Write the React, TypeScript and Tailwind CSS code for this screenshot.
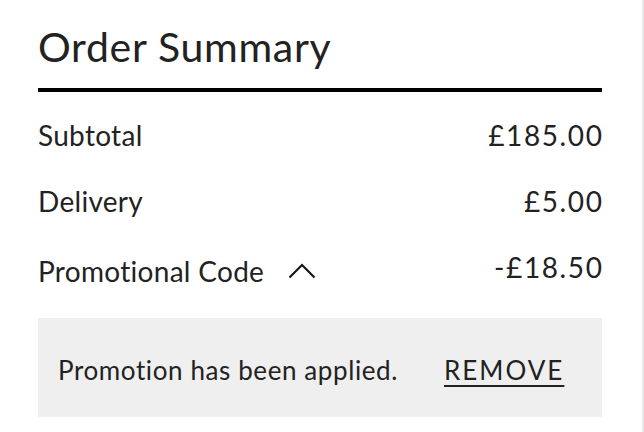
import React from "react";

const rows = [
  { label: "Subtotal", value: "£185.00" },
  { label: "Delivery", value: "£5.00" },
];

function Chevron() {
  return (
    <svg width="28" height="16" viewBox="0 0 28 16" fill="none" className="shrink-0">
      <path d="M1.5 14.5L14 2L26.5 14.5" stroke="#111" strokeWidth="2" />
    </svg>
  );
}

export default function App() {
  return (
    <div className="w-[644px] h-[432px] bg-white border-r-2 border-[#ebebeb] font-['Lato',sans-serif] text-[#222]">
      <div className="pl-[38px] pr-[40px] pt-[20px]">
        <h2 className="text-[41px] leading-[54px] font-normal tracking-[0.7px]">Order Summary</h2>
        <div className="mt-[14px] h-[4px] bg-black" />

        <div className="pt-[10px]">
          {rows.map((r) => (
            <div key={r.label} className="flex justify-between items-center h-[66px] text-[28px] tracking-[0.3px]">
              <span>{r.label}</span>
              <span className="tracking-[1.6px] -mr-[1.5px]">{r.value}</span>
            </div>
          ))}
          <div className="flex justify-between items-start h-[66px] text-[28px] tracking-[0.3px]">
            <button className="flex items-center gap-[24px] mt-[16px]">
              <span>Promotional Code</span>
              <Chevron />
            </button>
            <span className="mt-[12px] tracking-[1.6px] -mr-[1.5px]">-£18.50</span>
          </div>
        </div>

        <div className="mt-[18px] h-[99px] bg-[#efefef] flex items-center pl-[20px] pt-[5px] gap-[46px]">
          <span className="text-[26px] tracking-[0.6px]">Promotion has been applied.</span>
          <button className="text-[26px] tracking-[2px] underline decoration-2 underline-offset-[5px]">REMOVE</button>
        </div>
      </div>
    </div>
  );
}
